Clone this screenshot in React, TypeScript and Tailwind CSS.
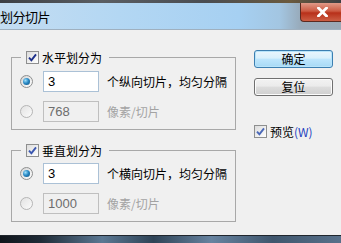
import React from 'react';

const Check = ({ tone }: { tone: string }) => (
  <span className="flex h-[13px] w-[13px] shrink-0 items-center justify-center border border-[#8e8f8f] bg-[linear-gradient(135deg,#dcdcdc,#ffffff)]">
    <svg viewBox="0 0 9 9" className="h-[9px] w-[9px]">
      <path d="M1 4.6 L3.4 7.3 L8 1.3" fill="none" stroke={tone} strokeWidth="1.9" />
    </svg>
  </span>
);

const Radio = ({ on }: { on: boolean }) => (
  <span
    className={`flex h-[13px] w-[13px] shrink-0 items-center justify-center rounded-full border ${
      on
        ? 'border-[#8e8f8f] bg-[linear-gradient(135deg,#d4d4d4,#ffffff)]'
        : 'border-[#b5b5b5] bg-[linear-gradient(135deg,#e2e2e2,#fbfbfb)]'
    }`}
  >
    {on && (
      <span className="h-[7px] w-[7px] rounded-full bg-[radial-gradient(circle_at_35%_35%,#9fe0fb_0%,#2a8ac6_45%,#0b4a78_100%)]" />
    )}
  </span>
);

const Row = ({ on, value, label }: { on: boolean; value: string; label: string }) => (
  <div className="flex h-[21px] items-center">
    <Radio on={on} />
    <div
      className={`ml-[10px] flex h-[21px] w-[56px] items-center border pl-[4px] font-['Liberation_Sans',sans-serif] text-[13px] ${
        on ? 'border-[#abc1d6] bg-white text-black' : 'border-[#bfbfbf] bg-[#f0f0f0] text-[#6d6d6d]'
      }`}
    >
      {value}
    </div>
    <span className={`ml-[8px] whitespace-nowrap ${on ? 'text-black' : 'text-[#a3a3a3]'}`}>{label}</span>
  </div>
);

const Group = ({
  title,
  tone,
  rows,
  pt,
}: {
  title: string;
  tone: string;
  rows: { value: string; label: string }[];
  pt: string;
}) => (
  <fieldset className="w-[225px] border border-[#a8a8a8]">
    <legend className="ml-[9px] h-[15px] pl-[5px] pr-[7px]">
      <span className="flex h-[15px] items-center gap-[3px]">
        <Check tone={tone} />
        <span className="leading-[15px]">{title}</span>
      </span>
    </legend>
    <div className={`flex flex-col gap-[9px] pb-[7px] pl-[8px] ${pt}`}>
      {rows.map((r, i) => (
        <Row key={i} on={i === 0} value={r.value} label={r.label} />
      ))}
    </div>
  </fieldset>
);

const Btn = ({ label, primary }: { label: string; primary?: boolean }) => (
  <button
    className={`flex h-[18px] w-[79px] items-center justify-center rounded-[3px] border text-[12px] leading-none text-black ${
      primary
        ? 'border-[#3c7fb1] bg-[linear-gradient(#eaf6fd,#d9f0fc_45%,#bee6fd_50%,#a7d9f5)] shadow-[inset_0_0_0_1px_#b8e4fa]'
        : 'border-[#707070] bg-[linear-gradient(#f2f2f2,#ebebeb_45%,#dddddd_50%,#cfcfcf)] shadow-[inset_0_0_0_1px_#fcfcfc]'
    }`}
  >
    {label}
  </button>
);

export default function App() {
  return (
    <div className="flex h-[243px] w-[341px] flex-col overflow-hidden bg-[#f0f0f0] font-['Noto_Sans_CJK_SC',sans-serif] text-[12px] text-black">
      <div className="h-[3px] bg-[linear-gradient(to_right,#3c3f44,#5a5e63_30%,#4a4d52_60%,#6b5a3e_85%,#3c3f44)]" />
      <div className="flex h-[27px] border-b border-[#9fb0bf] bg-[linear-gradient(to_right,#c4ddf2_0%,#b3d7f3_35%,#a6d0f2_70%,#a3c6e2_82%,#98abbb_88%,#9aa9b6_100%)]">
        <span className="self-center text-[13px] leading-none tracking-[-0.5px] text-black">划分切片</span>
        <div className="ml-auto flex h-[19px] w-[41px] items-center justify-center rounded-bl-[4px] border-b border-l border-[#5c2a20] bg-[linear-gradient(#e09a88,#cc5a42_45%,#b8301a_55%,#cc5e44)]">
          <svg viewBox="0 0 11 10" className="ml-[2px] h-[10px] w-[11px]">
            <path d="M1.5 1 L9.5 9 M9.5 1 L1.5 9" stroke="#ffffff" strokeWidth="2.8" strokeLinecap="square" />
          </svg>
        </div>
      </div>
      <div className="flex flex-1 pl-[11px] pt-[20px]">
        <div className="flex flex-col gap-[13px]">
          <Group
            title="水平划分为"
            tone="#1c2f8a"
            pt="pt-[6px]"
            rows={[
              { value: '3', label: '个纵向切片，均匀分隔' },
              { value: '768', label: '像素/切片' },
            ]}
          />
          <Group
            title="垂直划分为"
            tone="#3a56b0"
            pt="pt-[5px]"
            rows={[
              { value: '3', label: '个横向切片，均匀分隔' },
              { value: '1000', label: '像素/切片' },
            ]}
          />
        </div>
        <div className="ml-[18px] flex flex-col">
          <Btn label="确定" primary />
          <div className="mt-[10px]">
            <Btn label="复位" />
          </div>
          <div className="mt-[29px] flex items-center gap-[3px]">
            <Check tone="#4a68b8" />
            <span className="leading-[13px]">
              预览<span className="text-[#1e3fbf]">(W)</span>
            </span>
          </div>
        </div>
      </div>
      <div className="h-[8px] border-t border-[#20262d] bg-[linear-gradient(to_right,#0f151b_0%,#1f2b37_12%,#5b7893_30%,#2e4356_45%,#6783a0_62%,#3f566d_80%,#58718b_100%)]" />
    </div>
  );
}
